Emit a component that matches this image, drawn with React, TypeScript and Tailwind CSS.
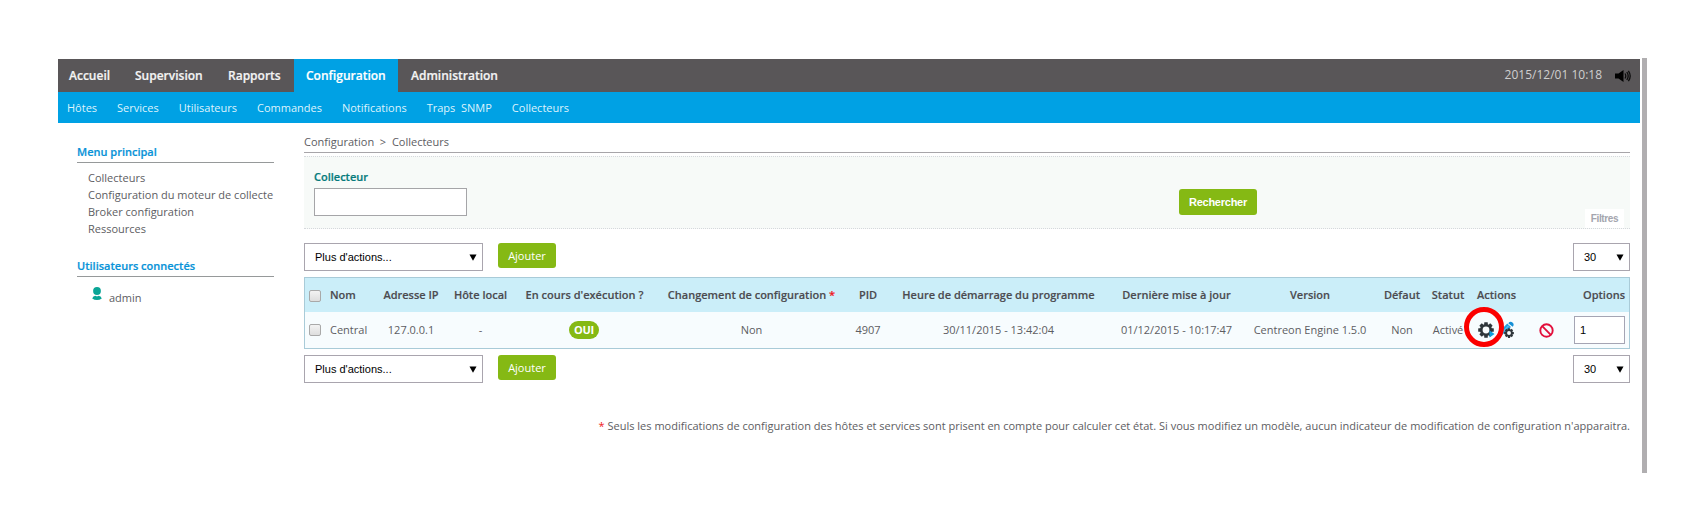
import type { ReactNode } from "react";

const tabs = [
  { label: "Accueil", box: "w-[66px] pl-[11px]" },
  { label: "Supervision", box: "w-[93px] pl-[11px]" },
  { label: "Rapports", box: "w-[77px] pl-[11px]" },
  { label: "Configuration", box: "w-[104px] pl-[12px] bg-[#00a1e4] text-white" },
  { label: "Administration", box: "w-[110px] pl-[13px]" },
];

const subTabs = ["Hôtes", "Services", "Utilisateurs", "Commandes", "Notifications", "Traps\u00a0 SNMP", "Collecteurs"];

const menu = ["Collecteurs", "Configuration du moteur de collecte", "Broker configuration", "Ressources"];

const columns =
  "grid grid-cols-[25px_44px_74px_65px_143px_191px_42px_219px_137px_130px_54px_38px_106px_56px] items-center";

function SpeakerIcon() {
  return (
    <svg width="16" height="14" viewBox="0 0 16 14">
      <path d="M0 4.500h3.500L8.500 1v12L3.500 9.500H0z" fill="#000" />
      <path d="M10 4.500q1.600 2.500 0 5M11.800 3q2.800 4 0 8M13.400 1.800q3.600 5.200 0 10.400" fill="none" stroke="#0c0c0c" strokeWidth="1.300" />
    </svg>
  );
}

function UserIcon() {
  return (
    <svg width="10" height="13" viewBox="0 0 10 13" fill="#0aa596">
      <ellipse cx="5" cy="4" rx="3.900" ry="4" />
      <path d="M0.200 11.400Q1 9 3.400 8.700q1.600 1 3.200 0Q9 9 9.800 11.400 7.600 13 5 13T0.200 11.400z" />
    </svg>
  );
}

function Gear({ size, hole }: { size: number; hole: number }) {
  return (
    <svg width={size} height={size} viewBox="-8 -8 16 16" className="block">
      <g fill="#2f363b">
        {[0, 45, 90, 135].map((a) => (
          <rect key={a} x="-1.800" y="-7.800" width="3.600" height="15.600" rx="0.500" transform={`rotate(${a})`} />
        ))}
        <circle r="6.100" />
      </g>
      <circle r={hole} fill="#f8fcfd" />
    </svg>
  );
}

function GearArrowIcon() {
  return (
    <span className="relative block size-[16px]">
      <Gear size={16} hole={3.4} />
      <svg width="6" height="8" viewBox="0 0 6 8" className="absolute right-[-1px] bottom-0">
        <path d="M0.500 0.500 5.600 4 0.500 7.500z" fill="#109fdc" />
      </svg>
    </span>
  );
}

function PencilGearIcon() {
  return (
    <span className="relative block size-[17px]">
      <svg width="17" height="17" viewBox="0 0 17 17">
        <path d="M10.200 2.400 14 6 4.500 14.600 0.400 16 1.600 11.400z" fill="#249fdf" />
        <path d="M11.300 2.200q2-2.400 4.200-.8t.2 4.400z" fill="#1690d6" />
        <path d="M2.600 14.200 11.800 4.600" stroke="#a9dcf5" strokeWidth="0.700" />
      </svg>
      <span className="absolute right-0 bottom-0">
        <Gear size={10} hole={3.1} />
      </span>
    </span>
  );
}

function BanIcon() {
  return (
    <svg width="15" height="15" viewBox="0 0 15 15" fill="none" stroke="#e2103c" strokeWidth="1.900">
      <circle cx="7.500" cy="7.500" r="6.200" />
      <path d="M3.200 3.200 11.800 11.800" />
    </svg>
  );
}

function Select({ label, box }: { label: string; box: string }) {
  return (
    <div className={`flex h-[28px] items-center justify-between border border-[#a9a5ae] bg-white pr-[5px] font-['Liberation_Sans',sans-serif] text-[11px] text-black ${box}`}>
      <span>{label}</span>
      <svg width="8" height="7" viewBox="0 0 8 7">
        <path d="M0.500 0.500h7L4 6.800z" fill="#000" />
      </svg>
    </div>
  );
}

function Checkbox() {
  return <span className="ml-[4px] block size-[12px] rounded-[2px] border border-[#a9a9a9] bg-linear-to-b from-[#f3f3f3] to-[#dedede]" />;
}

function Toolbar() {
  return (
    <div className="flex h-[28px] items-start justify-between">
      <div className="flex items-start gap-[15px]">
        <Select label="Plus d'actions..." box="w-[179px] pl-[10px]" />
        <button className="flex h-[25px] w-[58px] items-center justify-center rounded-[3px] bg-[#85b914] pt-px text-[11px] text-white">Ajouter</button>
      </div>
      <Select label="30" box="w-[57px] pl-[10px]" />
    </div>
  );
}

function Side({ title, children }: { title: string; children: ReactNode }) {
  return (
    <section>
      <h2 className="h-[20px] border-b border-[#96999a] text-[11px] leading-[17px] font-semibold text-[#0893d8] [-webkit-text-stroke:0.2px]">{title}</h2>
      {children}
    </section>
  );
}

export default function App() {
  return (
    <div className="flex h-[531px] w-[1705px] items-start gap-[2px] overflow-hidden bg-white pt-[58px] pl-[58px] font-['Open_Sans',sans-serif] text-[11px] text-[#5d5d62]">
      <div className="w-[1582px] pt-px">
        <nav className="flex h-[33px] items-stretch bg-[#595658] text-[12px] font-semibold text-[#f4f4f4]">
          {tabs.map((t) => (
            <a key={t.label} className={`flex items-center pt-px [-webkit-text-stroke:0.2px] ${t.box}`}>
              {t.label}
            </a>
          ))}
          <div className="ml-auto flex items-center gap-[13px] pr-[9px] font-normal text-[#cfcfcf]">
            <span className="pb-px">2015/12/01 10:18</span>
            <SpeakerIcon />
          </div>
        </nav>
        <nav className="flex h-[31px] items-center gap-[20px] bg-[#00a1e4] pl-[9px] text-[#def3fc]">
          {subTabs.map((t) => (
            <a key={t} className="pt-px">{t}</a>
          ))}
        </nav>

        <div className="flex items-start">
          <aside className="flex w-[246px] flex-col gap-[20px] pt-[20px] pr-[30px] pl-[19px]">
            <Side title="Menu principal">
              <ul className="pt-[6px] pl-[11px] leading-[17px] whitespace-nowrap">
                {menu.map((m) => (
                  <li key={m}>{m}</li>
                ))}
              </ul>
            </Side>
            <Side title="Utilisateurs connectés">
              <div className="flex items-start gap-[7px] pt-[10px] pl-[15px]">
                <UserIcon />
                <span className="pt-[2px] leading-[18px]">admin</span>
              </div>
            </Side>
          </aside>

          <main className="w-[1326px]">
            <div className="flex h-[30px] items-end border-b border-[#a7a5a9] pb-[2px] leading-[17px]">
              <span className="whitespace-pre">Configuration  &gt;  Collecteurs</span>
            </div>

            <section className="mt-[3px] flex h-[73px] items-stretch border-y border-dotted border-[#d5d8dc] bg-[#f7faf8] pl-[10px]">
              <div className="w-[865px] pt-[11px]">
                <label className="block h-[20px] leading-[17px] font-semibold text-[#067a7c] [-webkit-text-stroke:0.2px]">Collecteur</label>
                <input className="block h-[28px] w-[153px] border border-[#a5a5a8] bg-white" />
              </div>
              <button className="mt-[32px] flex h-[26px] w-[78px] items-center justify-center rounded-[3px] bg-[#85b914] font-['Liberation_Sans',sans-serif] text-[11px] font-bold tracking-[-0.25px] text-white">
                Rechercher
              </button>
              <span className="mr-[6px] ml-auto flex h-[19px] w-[39px] items-center justify-center self-end bg-white font-['Liberation_Sans',sans-serif] text-[10px] font-bold tracking-[-0.350px] text-[#a4a5ae]">
                Filtres
              </span>
            </section>

            <div className="pt-[14px]">
              <Toolbar />
            </div>

            <section className="mt-[6px] mb-[6px] border border-[#a9cbd8] bg-[#f7fcfe]">
              <div className={`h-[34px] bg-[#cbeef9] pt-px text-center font-semibold whitespace-nowrap text-[#4b4b50] [-webkit-text-stroke:0.15px] ${columns}`}>
                <Checkbox />
                <span className="text-left">Nom</span>
                <span>Adresse IP</span>
                <span>Hôte local</span>
                <span>En cours d'exécution ?</span>
                <span>
                  Changement de configuration <span className="text-[#f01820]">*</span>
                </span>
                <span>PID</span>
                <span>Heure de démarrage du programme</span>
                <span>Dernière mise à jour</span>
                <span>Version</span>
                <span>Défaut</span>
                <span>Statut</span>
                <span className="pl-[10px] text-left">Actions</span>
                <span className="pr-[4px] text-right">Options</span>
              </div>
              <div className={`h-[36px] text-center whitespace-nowrap ${columns}`}>
                <Checkbox />
                <span className="text-left">Central</span>
                <span>127.0.0.1</span>
                <span>-</span>
                <span className="mr-px flex h-[18px] w-[30px] items-center justify-center justify-self-center rounded-full bg-[#85b914] text-[11px] font-bold tracking-[-0.300px] text-white">OUI</span>
                <span>Non</span>
                <span>4907</span>
                <span>30/11/2015 - 13:42:04</span>
                <span>01/12/2015 - 10:17:47</span>
                <span>Centreon Engine 1.5.0</span>
                <span>Non</span>
                <span>Activé</span>
                <div className="relative flex items-center pl-[11px]">
                  <GearArrowIcon />
                  <span className="mb-[2px] ml-[3px]">
                    <PencilGearIcon />
                  </span>
                  <span className="mt-px ml-[25px]">
                    <BanIcon />
                  </span>
                  <span className="absolute top-1/2 left-[-3px] size-[40px] -translate-y-[23px] rounded-full border-[5px] border-[#fb0000]" />
                </div>
                <input defaultValue="1" className="ml-px block h-[28px] w-[51px] border border-[#a5a5b4] bg-white pl-[5px] font-['Liberation_Sans',sans-serif] text-[11px] text-black" />
              </div>
            </section>

            <Toolbar />

            <p className="mt-[34px] text-right leading-[17px] whitespace-nowrap">
              <span className="text-[#f01820]">*</span> Seuls les modifications de configuration des hôtes et services sont prisent en compte pour calculer cet état. Si vous modifiez un modèle, aucun indicateur de modification de configuration n'apparaitra.
            </p>
          </main>
        </div>
      </div>
      <div className="h-[415px] w-[5px] bg-[#b0aeb0]" />
    </div>
  );
}
